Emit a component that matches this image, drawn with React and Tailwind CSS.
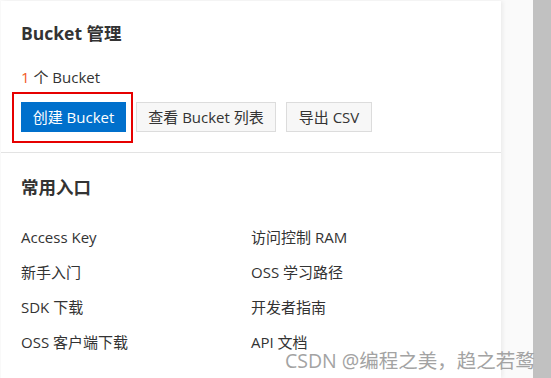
const LINKS = [
  ['Access Key', '访问控制 RAM'],
  ['新手入门', 'OSS 学习路径'],
  ['SDK 下载', '开发者指南'],
  ['OSS 客户端下载', 'API 文档'],
]

export default function App() {
  return (
    <div
      className="relative flex w-[551px] h-[378px] overflow-hidden bg-[#fafafa] text-[#333]"
      style={{ fontFamily: '"Open Sans", "Noto Sans CJK SC", sans-serif' }}
    >
      {/* main card */}
      <div className="mt-[1px] ml-[1px] w-[500px] bg-white shadow-[2px_0_4px_rgba(0,0,0,0.06)]">
        <div className="px-[20px] pt-[20px] pb-[20px] border-b border-[#e3e3e3]">
          <h2 className="text-[17.5px] leading-[24px] font-bold">Bucket 管理</h2>
          <p className="mt-[22px] text-[15px] leading-[20px]">
            <span className="text-[#f25a27]">1</span> 个 Bucket
          </p>
          <div className="mt-[15px] flex gap-[10px]">
            <div className="relative">
              <button className="h-[30px] w-[105px] bg-[#0070cc] text-white text-[15px]">创建 Bucket</button>
              <div className="absolute -left-[9px] -top-[10px] w-[121px] h-[51px] border-2 border-[#e60000] pointer-events-none" />
            </div>
            <button className="h-[30px] w-[140px] bg-[#f7f7f7] border border-[#dcdcdc] text-[15px]">查看 Bucket 列表</button>
            <button className="h-[30px] w-[86px] bg-[#f7f7f7] border border-[#dcdcdc] text-[15px]">导出 CSV</button>
          </div>
        </div>

        <div className="px-[20px] pt-[22px]">
          <h2 className="text-[17.5px] leading-[24px] font-bold">常用入口</h2>
          <div className="mt-[30px] grid grid-cols-[230px_1fr] gap-y-[19px] text-[15px] leading-[16px]">
            {LINKS.map(([a, b]) => (
              <>
                <span key={a}>{a}</span>
                <span key={b}>{b}</span>
              </>
            ))}
          </div>
        </div>
      </div>

      {/* scrollbar */}
      <div className="ml-auto w-[18px] h-full bg-[#c1c1c1]" />

      {/* watermark */}
      <div className="absolute left-[285px] top-[353px] text-[19.5px] leading-[16px] text-[#a3a3a3] whitespace-nowrap">
        CSDN @编程之美，趋之若鹜
      </div>
    </div>
  )
}
